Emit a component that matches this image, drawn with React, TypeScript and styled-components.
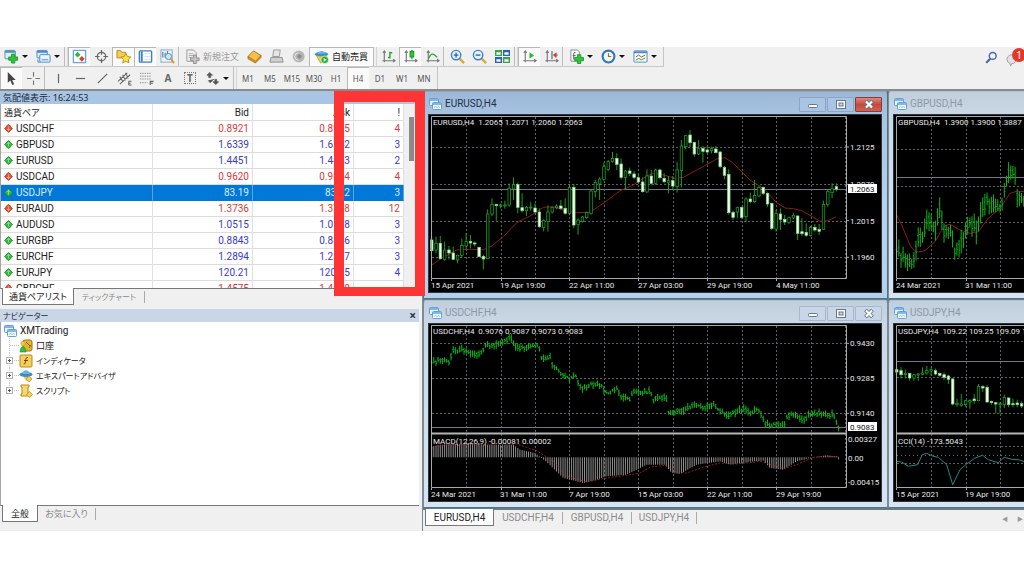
import React from 'react';
import styled, { createGlobalStyle, css } from 'styled-components';

const UI = '"Noto Sans", "Noto Sans CJK JP", sans-serif';
const CHART_FONT = 'Roboto, "Noto Sans", sans-serif';

const GlobalStyle = createGlobalStyle`
  * { box-sizing: border-box; }
  body { margin: 0; background: #fff; font-family: ${UI}; font-size: 10px; color: #222; overflow: hidden; }
  button { font: inherit; color: inherit; border: 0; background: none; padding: 0; margin: 0; }
`;

/* ---------- shell ---------- */
const Page = styled.div`padding: 47px 0; background: #fff;`;
const Terminal = styled.div`background: #f0f0f0; overflow: hidden;`;
const ToolRow = styled.div<{ $last?: boolean }>`
  display: flex;
  justify-content: space-between;
  height: ${p => (p.$last ? 24 : 20)}px;
  ${p => p.$last && css`border-bottom: 2px solid #8a8a8a;`}
`;
const Tools = styled.div<{ $last?: boolean }>`
  display: flex;
  align-items: stretch;
  border-right: 1px solid #c4c4c4;
  border-bottom: ${p => (p.$last ? 0 : 1)}px solid #c8c8c8;
  padding-right: 2px;
`;
const ToolButton = styled.button<{ $on?: boolean; $w?: number; $dim?: boolean }>`
  width: ${p => p.$w ?? 22}px;
  display: flex;
  align-items: center;
  justify-content: center;
  gap: 3px;
  font-size: 9px;
  line-height: 12px;
  white-space: nowrap;
  color: ${p => (p.$dim ? '#9a9a9a' : '#222')};
  ${p => p.$on && css`background: #fafafa; box-shadow: inset 1px 1px 0 #b8b8b8, inset -1px -1px 0 #fff;`}
`;
const CaretButton = styled.button`
  width: 10px;
  display: flex;
  align-items: center;
  justify-content: flex-start;
  &::after {
    content: '';
    border: 3px solid transparent;
    border-top-color: #111;
    border-bottom: 0;
  }
`;
const Divider = styled.span<{ $double?: boolean }>`
  width: ${p => (p.$double ? 4 : 3)}px;
  border-left: 1px solid #bdbdbd;
  ${p => p.$double && css`border-right: 1px solid #d6d6d6;`}
`;
const Frame = styled.button<{ $on?: boolean }>`
  width: 22px;
  font-size: 8px;
  color: #555;
  ${p => p.$on && css`background: #fafafa; box-shadow: inset 1px 1px 0 #b8b8b8;`}
`;
const Right = styled.div`display: flex; align-items: center; gap: 7px;`;
const Alerts = styled.button`position: relative; display: flex; align-items: flex-end; width: 18px; height: 20px;`;
const Badge = styled.span`
  position: absolute;
  top: 1px;
  left: 6px;
  width: 14px;
  height: 14px;
  border-radius: 50%;
  background: #e2382a;
  color: #fff;
  font-size: 10px;
  line-height: 14px;
  text-align: center;
`;
const Body = styled.div`display: flex; align-items: stretch;`;

/* ---------- left side ---------- */
const Side = styled.aside`position: relative; flex: 0 0 422px; min-width: 0; padding: 0 3px 4px 0;`;
const Panel = styled.section`display: flex; flex-direction: column;`;
const PanelHead = styled.h2<{ $idle?: boolean }>`
  margin: 0;
  display: flex;
  justify-content: space-between;
  align-items: center;
  height: 13px;
  padding: 0 3px;
  font-size: 9px;
  line-height: 12px;
  font-weight: 400;
  color: #1d2a3a;
  background: ${p => (p.$idle ? '#c9d6e6' : '#a9c5e4')};
`;
const CloseX = styled.button`font-size: 12px; font-weight: 700; line-height: 12px; color: #333;`;
const Kana = styled.span<{ $small?: boolean }>`
  font-family: "Noto Sans CJK JP", sans-serif;
  font-feature-settings: "palt";
  font-size: ${p => (p.$small ? 8 : 9)}px;
`;
const Scroller = styled.div`
  display: flex;
  height: 185px;
  overflow: hidden;
  background: #fff;
  border-left: 1px solid #a5a5a5;
  border-bottom: 1px solid #777;
`;
const Quotes = styled.table`
  flex: 1;
  align-self: flex-start;
  table-layout: fixed;
  border-collapse: separate;
  border-spacing: 0;
  font-family: Roboto, ${UI};
  font-size: 10px;
  line-height: 15px;
`;
const Th = styled.th<{ $w?: number; $left?: boolean }>`
  width: ${p => (p.$w ? `${p.$w}px` : 'auto')};
  height: 17px;
  padding: 0 3px;
  font-weight: 400;
  text-align: ${p => (p.$left ? 'left' : 'right')};
  border-right: 1px solid #e0e0e0;
  border-bottom: 1px solid #dcdcdc;
`;
const Td = styled.td<{ $tone: string; $sel?: boolean }>`
  height: 16px;
  padding: 0 3px;
  text-align: right;
  color: ${p => (p.$sel ? '#d8ecff' : p.$tone)};
  border-right: 1px solid ${p => (p.$sel ? '#5aa5e5' : '#e0e0e0')};
  border-bottom: 1px solid ${p => (p.$sel ? '#0078d7' : '#dcdcdc')};
  background: ${p => (p.$sel ? '#0078d7' : 'transparent')};
`;
const Pair = styled.span`display: flex; align-items: center; gap: 3px;`;
const Track = styled.div`flex: 0 0 15px; background: #f0f0f0; padding: 13px 5px 0;`;
const Thumb = styled.div`height: 44px; background: #8a8a8a;`;
const Tabs = styled.div<{ $tall?: boolean }>`display: flex; align-items: flex-start; height: ${p => (p.$tall ? 21 : 20)}px; padding-left: 2px;`;
const Tab = styled.button<{ $on?: boolean; $w: number; $latin?: boolean }>`
  width: ${p => p.$w}px;
  height: 16px;
  font-family: ${p => (p.$latin ? `Roboto, ${UI}` : UI)};
  font-size: ${p => (p.$latin ? 10 : 9)}px;
  line-height: 15px;
  white-space: nowrap;
  color: ${p => (p.$on ? '#222' : '#8b8b8b')};
  ${p =>
    p.$on
      ? css`background: #fff; border: 1px solid #777; border-top: 0; margin-top: -1px; height: 17px; line-height: 17px;`
      : css`border-right: 1px solid #aaa; height: 12px; margin-top: 2px; line-height: 12px;`}
`;
const Tree = styled.ul`
  list-style: none;
  margin: 0;
  padding: 1px 0 0 1px;
  height: 184px;
  background: #fff;
  border-left: 1px solid #a5a5a5;
  border-bottom: 1px solid #777;
`;
const Node = styled.li<{ $root?: boolean }>`
  display: flex;
  align-items: center;
  height: 15px;
  padding-left: ${p => (p.$root ? 2 : 4)}px;
  font-family: ${p => (p.$root ? 'Roboto, ' : '')}${UI};
  font-size: ${p => (p.$root ? 10 : 9)}px;
  line-height: 14px;
  & > span, & > b { margin-left: 3px; font-weight: 400; }
`;
const Highlight = styled.div`
  position: absolute;
  z-index: 3;
  left: 334px;
  right: -3px;
  top: 0;
  height: 205px;
  border: solid #ff3434;
  border-width: 11px 10px 9px 10px;
`;

/* ---------- chart windows ---------- */
const Main = styled.main`flex: 1; min-width: 0; overflow: hidden; border-left: 1px solid #7d8b93;`;
const Desktop = styled.div`
  display: grid;
  grid-template-columns: 465px 465px;
  row-gap: 1px;
  padding-bottom: 1px;
  background: #5b7f93;
  border-bottom: 1px solid #777;
`;
const Win = styled.section<{ $active?: boolean }>`
  padding: 0 5px 6px;
  border: 1px solid ${p => (p.$active ? '#52717f' : '#7b8c98')};
  border-top-color: ${p => (p.$active ? '#8fa9c0' : '#b5c3d0')};
  border-bottom: 1px solid #52747f;
  border-radius: 3px 3px 0 0;
  background: ${p =>
    p.$active
      ? 'linear-gradient(#9cb8d8, #a9c4e2 12%, #b9d2ec 60%, #b5d0ec)'
      : 'linear-gradient(#c1cedc, #cbd8e6 12%, #d8e4f2)'};
`;
const TitleBar = styled.header`display: flex; align-items: center; height: 23px; gap: 3px;`;
const Title = styled.h3<{ $active?: boolean }>`
  flex: 1;
  margin: 0;
  font-family: Roboto, ${UI};
  font-size: 10px;
  line-height: 14px;
  padding-top: 1px;
  font-weight: 400;
  color: ${p => (p.$active ? '#1f3044' : '#8c98a6')};
`;
const Controls = styled.div`display: flex; gap: 1px; padding-top: 2px;`;
const WinButton = styled.button<{ $red?: boolean; $active?: boolean }>`
  width: 27px;
  height: 15px;
  display: flex;
  align-items: center;
  justify-content: center;
  border: 1px solid ${p => (p.$red ? '#8c3a36' : p.$active ? '#8ca6c4' : '#a9b8ca')};
  border-radius: 1px;
  background: ${p =>
    p.$red ? 'linear-gradient(#d98a80, #c5493b 50%, #d4604c)' : p.$active ? '#a9c4e4' : '#c8d6e8'};
`;
const Plot = styled.svg`display: block; background: #000; outline: 1px solid #2a3540;`;

const WinControls = ({ active }: { active?: boolean }) => (
  <Controls>
    <WinButton $active={active} aria-label="Minimize">
      <svg width="10" height="8"><rect x=".5" y="3.500" width="9" height="3" rx="1" fill="#fff" stroke="#65778c" /></svg>
    </WinButton>
    <WinButton $active={active} aria-label="Maximize">
      <svg width="10" height="9"><rect x=".5" y=".5" width="9" height="8" fill="#fff" stroke="#65778c" /><rect x="3" y="3" width="4" height="3" fill="#c8d6e8" stroke="#65778c" /></svg>
    </WinButton>
    <WinButton $active={active} $red={active} aria-label="Close">
      <svg width="10" height="9"><path d="M1.500 1 8.500 8M8.500 1 1.500 8" stroke="#65778c" strokeWidth="3.800" /><path d="M2 1.500 8 7.500M8 1.500 2 7.500" stroke="#fff" strokeWidth="2.200" /></svg>
    </WinButton>
  </Controls>
);

const ChartIcon = () => (
  <svg width="13" height="12" viewBox="0 0 13 12" aria-hidden="true">
    <rect x=".5" y=".5" width="9" height="7" rx="1" fill="#e8f3fd" stroke="#5fa0dc" />
    <path d="M.5 2h9" stroke="#5fa0dc" strokeWidth="1.500" />
    <rect x="3.500" y="4.500" width="9" height="7" rx="1" fill="#f4f9fe" stroke="#5fa0dc" />
    <path d="M3.500 6h9" stroke="#5fa0dc" strokeWidth="1.500" />
    <path d="M5 9.500l1.500-1 1.500 1 1.500-1 1.500 1" fill="none" stroke="#8fbfe8" />
  </svg>
);

/* Chart series are kept on a grid of thirds of a pixel; px and py map them to the plot. */
const px = (v: number) => v / 3 - 9;
type Pt = [number, number];
type Candle = [0 | 1, number, number, number, number];
const noise = (i: number) => { const s = Math.sin(i * 12.9898) * 43758.5453; return s - Math.floor(s); };
const sample = (pts: Pt[], x: number) => {
  for (let i = 1; i < pts.length; i++) {
    if (x <= pts[i][0]) {
      const [a, b] = [pts[i - 1], pts[i]];
      return a[1] + ((b[1] - a[1]) * (x - a[0])) / (b[0] - a[0]);
    }
  }
  return pts[pts.length - 1][1];
};

/* filled, body top, body bottom, high, low */
const eurusd: Candle[] = [
  [1,450,482,440,482],[0,460,480,440,490],[1,460,506,438,508],[0,480,508,455,512],[1,480,489,468,508],[1,489,508,470,510],
  [0,496,510,494,520],[0,466,496,446,504],[0,455,468,430,480],[1,454,459,435,475],[1,459,462,455,470],[1,472,500,470,502],
  [1,499,507,494,538],[0,372,506,358,506],[0,343,372,325,378],[1,343,347,342,392],[0,345,347,340,355],[0,345,348,332,356],
  [0,295,345,280,350],[0,283,297,262,330],[1,283,352,278,370],[1,353,362,310,368],[0,352,362,348,378],[0,351,354,335,362],
  [1,354,366,340,368],[1,366,410,355,414],[0,392,412,388,424],[0,366,394,346,425],[0,352,366,350,370],[0,348,353,343,358],
  [1,348,355,330,358],[1,355,370,325,374],[0,292,370,282,376],[1,292,405,282,415],[0,390,403,385,434],[0,381,395,378,398],
  [0,367,383,365,386],[0,303,370,298,374],[0,277,305,270,322],[0,267,282,262,330],[0,230,268,218,272],[0,215,238,210,244],
  [0,205,214,186,218],[1,205,223,190,240],[1,222,262,205,268],[0,243,262,240,298],[1,243,250,233,258],[1,252,262,244,268],
  [1,263,276,252,282],[1,276,305,262,308],[0,258,306,238,308],[1,258,280,240,284],[0,240,280,236,284],[1,240,263,236,268],
  [1,265,275,250,280],[0,272,277,258,310],[1,272,288,258,300],[0,240,290,215,308],[0,168,242,150,292],[0,137,170,135,178],
  [1,135,158,120,172],[1,157,192,155,200],[0,176,192,150,195],[1,175,184,168,218],[1,180,186,168,190],[0,176,182,170,190],
  [1,177,188,168,190],[1,186,230,183,235],[1,232,256,228,268],[1,253,368,238,374],[1,367,382,362,390],[0,353,366,350,385],
  [1,352,382,350,386],[0,327,380,322,396],[1,327,335,308,340],[0,316,335,270,338],[0,292,318,288,322],[1,292,310,290,315],
  [1,310,342,308,350],[1,340,415,338,420],[0,370,417,360,425],[1,372,388,355,420],[1,388,396,375,405],[0,383,397,380,402],
  [0,376,384,368,388],[1,378,430,376,450],[1,425,431,385,438],[1,427,436,400,440],[0,412,436,408,440],[1,412,420,402,425],
  [1,418,424,402,435],[0,343,418,332,420],[0,305,343,300,350],[0,296,308,280,325],[1,290,297,280,305],
];
const usdjpy: Candle[] = [
  [1,215,222,208,228],[1,218,230,208,242],[0,226,230,215,242],[1,226,240,225,248],[0,230,240,228,248],[0,228,231,226,248],
  [0,225,229,208,232],[0,218,225,204,230],[0,215,219,206,234],[1,218,228,212,232],[1,226,232,224,236],[1,230,238,224,246],
  [1,234,244,230,258],[1,243,318,240,322],[0,316,320,302,326],[0,318,322,288,326],[0,308,320,306,326],[0,307,312,304,332],
  [1,303,308,288,318],[0,265,308,258,310],[1,266,270,262,282],[1,268,312,262,314],[1,310,314,308,320],[1,314,318,312,346],
  [0,317,320,312,347],[0,298,320,290,330],[1,300,320,298,328],[1,317,320,302,328],[1,315,320,305,328],[1,317,324,310,330],
  [1,320,330,314,336],[0,312,330,306,336],
];
const eurMa: Pt[] = [[35,525],[60,508],[110,480],[150,478],[190,479],[215,468],[250,440],[290,398],[330,378],[370,352],[400,350],[435,362],[470,368],[510,367],[550,340],[600,302],[640,285],[680,258],[700,250],[730,255],[765,265],[790,262],[840,235],[890,207],[915,203],[940,220],[990,270],[1030,295],[1070,338],[1095,354],[1120,356],[1145,362],[1180,382],[1200,394],[1225,392],[1248,380]];
const gbpPath: Pt[] = [[35,635],[50,645],[65,665],[80,670],[95,610],[120,570],[130,535],[145,560],[155,560],[160,500],[168,500],[175,570],[195,575],[210,625],[235,600],[245,545],[275,570],[290,500],[305,480],[325,500],[350,495],[360,430],[370,395],[388,395],[393,450],[405,480],[440,500]];
const gbpMa: Pt[] = [[35,525],[50,555],[75,615],[88,632],[100,636],[120,632],[150,605],[170,570],[182,556],[195,553],[225,570],[255,580],[280,575],[310,535],[345,505],[375,460],[395,454],[440,456]];
const chfPath: Pt[] = [[35,195],[50,188],[90,188],[95,160],[110,158],[125,155],[140,160],[165,168],[185,162],[200,140],[230,140],[245,130],[260,128],[275,118],[285,145],[320,150],[340,142],[355,138],[365,180],[390,178],[400,205],[430,232],[445,240],[465,232],[485,272],[500,268],[515,255],[545,265],[560,285],[590,272],[605,298],[630,302],[640,285],[690,280],[700,305],[738,298],[745,345],[790,338],[820,320],[855,330],[875,318],[920,352],[950,340],[975,332],[990,348],[1015,330],[1035,378],[1090,382],[1105,350],[1130,350],[1150,368],[1170,345],[1240,350],[1250,378],[1262,390]];
const macd: Pt[] = [[35,445],[60,440],[130,437],[200,440],[280,440],[300,455],[345,465],[380,492],[430,540],[490,555],[530,545],[560,535],[620,530],[680,500],[735,500],[755,525],[780,528],[830,500],[900,490],[930,500],[1000,490],[1030,488],[1050,510],[1090,515],[1130,490],[1170,480],[1220,472],[1250,475],[1262,495]];
const signal: Pt[] = [[35,450],[80,440],[180,438],[290,438],[350,458],[400,490],[440,535],[500,552],[560,540],[620,532],[660,525],[690,508],[735,502],[770,522],[800,525],[850,508],[900,495],[950,498],[1020,490],[1060,502],[1090,512],[1130,500],[1180,478],[1220,474],[1262,478]];
const cci: Pt[] = [[35,490],[50,492],[70,505],[98,500],[112,470],[125,466],[145,475],[160,478],[185,500],[203,560],[225,515],[245,498],[270,480],[293,472],[310,485],[340,494],[358,478],[380,484],[400,485],[440,498]];

interface ChartProps {
  shift: number;
  title: string;
  grid: number[];
  price: [number, string];
  prices: [number, string][];
  times: string[];
  candles?: Candle[];
  bars?: Pt[];
  spread?: number;
  ma?: Pt[];
  split?: boolean;
  lower?: 'macd' | 'cci';
  lowerTitle?: string;
  lowerLabels?: [number, string][];
}

const Chart = (p: ChartProps) => {
  const py = (v: number) => v / 3 - p.shift;
  const line = (pts: Pt[]) => pts.map(([x, y]) => `${px(x).toFixed(1)},${py(y).toFixed(1)}`).join(' ');
  const cols = Array.from({ length: 12 }, (_, i) => Math.round(2.6 + 34.45 * (i + 1)) + 0.5);
  const barXs = p.bars ? Array.from({ length: 191 }, (_, i) => 35 + i * 6.458).filter(x => x <= p.bars![p.bars!.length - 1][0]) : [];
  const spread = p.spread ?? 11;
  return (
    <Plot width="452" height="177" viewBox="0 0 452 177" fontFamily={CHART_FONT} fontSize="8" fill="#e6e6e6" role="img" aria-label={p.title}>
      <g stroke="#8b96a0" strokeWidth="1" strokeDasharray="2 2" opacity=".65">
        {cols.map(x => <path key={x} d={`M${x} 2V163`} />)}
        {p.grid.map(y => <path key={y} d={`M3 ${Math.round(py(y)) + 0.5}H418`} />)}
      </g>
      <path d={`M3 ${Math.round(py(p.price[0])) + 0.5}H418`} stroke="#6f7a88" />
      {p.lower === 'macd' && (
        <g>
          <path d={barXs.map(x => `M${px(x).toFixed(1)} ${py(478)}V${py(sample(macd, x)).toFixed(1)}`).join('')} stroke="#8f8f8f" fill="none" />
          <polyline points={line(signal)} fill="none" stroke="#b02a2a" strokeWidth=".8" strokeDasharray="2 1.500" />
        </g>
      )}
      {p.lower === 'cci' && (
        <g>
          <path d={`M3 ${py(472)}H418`} stroke="#77818b" strokeDasharray="1 3" />
          <polyline points={line(cci)} fill="none" stroke="#2f8583" strokeWidth="1" />
        </g>
      )}
      {p.ma && <polyline points={line(p.ma)} fill="none" stroke="#8e1a1a" strokeWidth="1" />}
      {p.candles?.map(([full, top, bottom, high, low], i) => {
        const x = 2.7 + i * 4.305;
        return (
          <g key={i} stroke="#1cae27" strokeWidth=".9">
            <path d={`M${x} ${py(high)}V${py(top)}M${x} ${py(bottom)}V${py(low)}`} />
            <rect x={x - 1.2} y={py(top)} width="2.500" height={Math.max(1, (bottom - top) / 3)} fill={full ? '#f2fff0' : '#000'} stroke={full ? '#7fdc7f' : '#1cae27'} strokeWidth=".7" />
          </g>
        );
      })}
      {p.bars && (
        <path
          fill="none"
          stroke="#14b31e"
          strokeWidth="1"
          d={barXs.map((x, i) => {
            const y = sample(p.bars!, x) + (noise(i + 900) - 0.5) * spread * 0.7;
            const up = spread * (0.25 + noise(i));
            const down = spread * (0.25 + noise(i + 300));
            return `M${px(x).toFixed(1)} ${py(y - up).toFixed(1)}V${py(y + down).toFixed(1)}M${px(x - 3).toFixed(1)} ${py(y - up / 3).toFixed(1)}h1M${px(x).toFixed(1)} ${py(y + down / 3).toFixed(1)}h1`;
          }).join('')}
        />
      )}
      <path d="M2.500 163.500V1.500H417.500V163.500Z" fill="none" stroke="#a9a9a9" />
      {p.split && <path d="M2 109.500H418" stroke="#b5b5b5" strokeWidth="2" />}
      {[0, 2, 4, 6, 8, 10].map(i => <path key={i} d={`M${i ? cols[i - 1] : 2.5} 164v2`} stroke="#a9a9a9" />)}
      {p.prices.map(([y, t]) => <g key={t}><path d={`M418 ${py(y)}h2`} stroke="#a9a9a9" /><text x="421" y={py(y) + 3}>{t}</text></g>)}
      {p.lowerLabels?.map(([y, t]) => <text key={t} x="419" y={py(y) + 3}>{t}</text>)}
      <rect x="419" y={py(p.price[0]) - 5} width="29" height="9" fill="#fff" />
      <text x="421" y={py(p.price[0]) + 3} fill="#111">{p.price[1]}</text>
      <text x="4" y="10" style={{ whiteSpace: 'pre' }}>{p.title}</text>
      {p.lowerTitle && <text x="4" y={py(428) + 3}>{p.lowerTitle}</text>}
      {p.times.map((t, i) => <text key={t} x={2 + Math.round(i * 68.9)} y="173">{t}</text>)}
    </Plot>
  );
};

const ChartWindow = ({ name, active, ...chart }: ChartProps & { name: string; active?: boolean }) => (
  <Win $active={active}>
    <TitleBar>
      <ChartIcon />
      <Title $active={active}>{name}</Title>
      <WinControls active={active} />
    </TitleBar>
    <Chart {...chart} />
  </Win>
);

/* ---------- toolbar drawings, each on a 16 x 16 field ---------- */
const Plus = ({ x = 6, y = 6 }: { x?: number; y?: number }) => (
  <path d={`M${x + 3} ${y}h3.500v3h3v3.500h-3v3h-3.500v-3h-3v-3.500h3z`} fill="#2fc53a" stroke="#128a1c" strokeWidth=".8" />
);
const Axes = () => <path d="M3.500 2v12M1.500 12.500H15M2 4l1.500-2L5 4M13 11l2 1.500L13 14" fill="none" stroke="#777" strokeWidth="1.200" />;
const drawings: Record<string, React.ReactNode> = {
  newChart: <><rect x="1" y="1.500" width="11" height="9" rx="1" fill="#dff0f4" stroke="#4b93b2" /><path d="M1 3h11" stroke="#4b93b2" strokeWidth="2" /><Plus x={5} y={5.5} /></>,
  profiles: <><rect x="1" y="1.500" width="11" height="8" rx="1" fill="#dcecfb" stroke="#4b8ac9" /><path d="M1 3h11" stroke="#4b8ac9" strokeWidth="2" /><rect x="4" y="6" width="11" height="8" rx="1" fill="#eaf4fd" stroke="#4b8ac9" /><path d="M2 11v3h3M6 11.500h7" stroke="#4b8ac9" fill="none" /></>,
  market: <><rect x="1.500" y="1.500" width="13" height="13" fill="#fff" stroke="#68a8dd" strokeWidth="1.400" /><path d="M6 3l3 3-3 3-3-3z" fill="#33b83c" /><path d="M10.500 7.500l3 3-3 3-3-3z" fill="#d8432b" /></>,
  target: <g fill="none" stroke="#666" strokeWidth="1.300"><circle cx="8" cy="8" r="4.500" /><path d="M8 1v5M8 10v5M1 8h5M10 8h5" /></g>,
  star: <><path d="M1 1.500h4l1 2h4v6H1z" fill="#f2ce5a" stroke="#b88a1c" /><path d="M10.500 4.500l1.700 3.500 3.500.5-2.600 2.500.7 3.800-3.300-1.800-3.300 1.800.7-3.800-2.600-2.500 3.500-.5z" fill="#ffe04d" stroke="#bd8d12" /></>,
  terminal: <><rect x="1.500" y="2" width="13" height="12" rx="1" fill="#fdfdff" stroke="#3d7fc0" strokeWidth="1.500" /><path d="M4 2.500v11" stroke="#3d7fc0" strokeWidth="2" /><path d="M7 5h6M7 8h6M7 11h6" stroke="#d5dfea" /></>,
  tester: <><rect x="1" y="1" width="12" height="13" fill="#eef5fb" stroke="#8aa5bd" /><path d="M3 3v6M5.500 4v5M8 2v5" stroke="#5a86ad" strokeWidth="1.300" /><circle cx="9" cy="8" r="3.300" fill="#cfe6f8" stroke="#5187b8" /><path d="M11.500 10.500L15 15" stroke="#d29c2a" strokeWidth="2" /></>,
  order: <><path d="M2 1h7l3 3v9H2z" fill="#f2f2f2" stroke="#9a9a9a" /><path d="M4 5h5M4 7h5M4 9h3" stroke="#aaa" /><path d="M9 6.500h3v3h3v3h-3v3H9v-3H6v-3h3z" fill="#c4c4c4" stroke="#8d8d8d" /></>,
  book: <><path d="M1 8l6-6 8 5-6 7z" fill="#f5c04a" stroke="#a9731a" /><path d="M1 8v2.500L9 15l6-6V7l-6 6z" fill="#d9952a" stroke="#a06b14" strokeWidth=".7" /></>,
  print: <><path d="M5 1h7l-1 7H4z" fill="#e5e5e5" stroke="#9a9a9a" /><path d="M2 9h12l1 5H1z" fill="#d0d0d0" stroke="#8f8f8f" /></>,
  signal: <><circle cx="8" cy="8" r="6.500" fill="#b5b5b5" /><path d="M8 4a4 4 0 0 0 0 8M8 1.500a6.500 6.500 0 0 0 0 13" fill="none" stroke="#e8e8e8" /><circle cx="9" cy="8" r="2.300" fill="#8d8d8d" /></>,
  auto: <><path d="M2 6l5 9 6-3V6z" fill="#f2c94c" stroke="#b98a1b" strokeWidth=".7" /><ellipse cx="8" cy="5.500" rx="7" ry="2.500" fill="#3f8fcd" /><path d="M4 5c0-4 8-4 8 0z" fill="#6cb4e6" /><circle cx="11.500" cy="11.500" r="4" fill="#25b432" stroke="#fff" strokeWidth=".6" /><path d="M10.300 9.500v4l3.200-2z" fill="#fff" /></>,
  bars: <><Axes /><path d="M9.500 3v7M9.500 4H12M7.500 9h2" stroke="#2aa336" strokeWidth="1.500" fill="none" /></>,
  candles: <><Axes /><path d="M9.500 1v10" stroke="#13941f" strokeWidth="1.300" /><rect x="7.500" y="2.500" width="4" height="6" fill="#2fc53a" stroke="#13941f" /></>,
  line: <><Axes /><path d="M4 10c2-6 5-6 9-1" fill="none" stroke="#2aa336" strokeWidth="1.400" /></>,
  zoomIn: <><path d="M9.500 9.500L15 15" stroke="#d9ab33" strokeWidth="2.600" /><circle cx="6.500" cy="6.500" r="5" fill="#e3f1fc" stroke="#3e83c9" strokeWidth="1.500" /><path d="M4 6.500h5M6.500 4v5" stroke="#2a6bb5" strokeWidth="1.500" /></>,
  zoomOut: <><path d="M9.500 9.500L15 15" stroke="#d9ab33" strokeWidth="2.600" /><circle cx="6.500" cy="6.500" r="5" fill="#e3f1fc" stroke="#3e83c9" strokeWidth="1.500" /><path d="M4 6.500h5" stroke="#2a6bb5" strokeWidth="1.500" /></>,
  tile: <><path d="M0 1h7.500v6.500H0zM8.500 8.500H16V15H8.500z" fill="#3ba344" /><path d="M8.500 1H16v6.500H8.500zM0 8.500h7.500V15H0z" fill="#2c62b5" /><path d="M1.500 3.500H6v2.500H1.500zM10 3.500h4.500v2.500H10zM1.500 11H6v2.500H1.500zM10 11h4.500v2.500H10z" fill="#f3f8ff" /></>,
  scroll: <><Axes /><path d="M8 3.500v7l5-3.500z" fill="#2fb83a" /></>,
  shift: <><Axes /><path d="M8.500 2v9" stroke="#777" strokeWidth="1.400" /><path d="M10 6.500l3-2.500v5zM13 6.500h2" fill="#b5463a" stroke="#b5463a" strokeWidth=".8" /></>,
  indicators: <><path d="M2 1h7l2 2v10H2z" fill="#fafafa" stroke="#888" /><path d="M7 4c-2-1-2 1-2 3v4M4 7h3" fill="none" stroke="#555" /><Plus x={6} y={6} /></>,
  clock: <><circle cx="8" cy="8" r="6.300" fill="#f4f9fe" stroke="#2f74bd" strokeWidth="2.200" /><path d="M8 4.500V8h3" fill="none" stroke="#a5642a" strokeWidth="1.300" /></>,
  template: <><rect x="1" y="2" width="14" height="12" rx="1" fill="#f5faf5" stroke="#4b8ac9" /><path d="M1 3.500h14" stroke="#4b8ac9" strokeWidth="2" /><path d="M3 8.500l3-2 3 2 4-2" fill="none" stroke="#c0492b" /><path d="M3 12l3-2 3 1.500 4-2" fill="none" stroke="#2aa336" /></>,
  search: <><path d="M6.500 9.500L1.500 14.500" stroke="#3f5fae" strokeWidth="2.400" /><circle cx="9.500" cy="6" r="4.200" fill="#f2f6ff" stroke="#4767b5" strokeWidth="1.800" /></>,
  bubble: <path d="M1 8a5 5 0 0 1 10 0 5 4.500 0 0 1-5 4.500L5 15l-1-3A4.500 4.500 0 0 1 1 8z" fill="#e2e2e6" stroke="#9a9aa2" />,
  cursor: <path d="M4 1v11.500l2.800-2.300 2 4.800 2-1-2-4.500h3.700z" fill="#444" />,
  cross: <path d="M8 1v5M8 10v5M1 8h5M10 8h5" stroke="#777" strokeWidth="1.200" />,
  vline: <path d="M8 3v10" stroke="#666" strokeWidth="1.300" />,
  hline: <path d="M3 8h10" stroke="#666" strokeWidth="1.300" />,
  trend: <path d="M3 13L13 3" stroke="#666" strokeWidth="1.300" />,
  channel: <path d="M1 11L11 2M3 14L14 4M3 6l3 5M6 4l3 6M9 2l3 6M12.500 11v4M12.500 11h3M12.500 13h2M12.500 15h3" stroke="#666" strokeWidth="1.100" />,
  fibo: <><path d="M1 2.500h12M1 5.500h12M1 8.500h12M1 12.500h8" stroke="#888" strokeDasharray="1.500 1" /><path d="M12 15v-4h3.500M12 13h3" fill="none" stroke="#666" strokeWidth="1.200" /></>,
  arrows: <path d="M5 1.500l3 3H6v2.500H4V4.500H2zM3.500 10l2 2.500 4-4M11.500 14.500l-3-3h2V9h2v2.500h2z" fill="#555" stroke="#555" strokeWidth=".8" />,
};
const Icon = ({ name, size = 15 }: { name: string; size?: number }) => (
  <svg width={size} height={size} viewBox="0 0 16 16" aria-hidden="true">{drawings[name]}</svg>
);
const Tool = ({ name, on, w }: { name: string; on?: boolean; w?: number }) => (
  <ToolButton aria-label={name} $on={on} $w={w}><Icon name={name} /></ToolButton>
);

const Letter = styled.span<{ $boxed?: boolean }>`
  font-size: 10px;
  line-height: 11px;
  font-weight: 700;
  color: #666;
  ${p => p.$boxed && css`width: 12px; border: 1px dotted #777; line-height: 10px;`}
`;

/* ---------- tree drawings ---------- */
const treeIcons: React.ReactNode[] = [
  <><rect x="4" y="1" width="9" height="11" rx="2" fill="#e5b52e" stroke="#9c7213" /><path d="M7 3l4 4M10 9l2-3" stroke="#8a6210" /><circle cx="4" cy="4.500" r="2.200" fill="#f2c94c" stroke="#b98a1b" strokeWidth=".5" /><path d="M1 13c0-7 6-7 6 0z" fill="#35bf3e" stroke="#1c8f27" strokeWidth=".6" /></>,
  <><rect x="1" y="1" width="12" height="12" rx="1" fill="#f4cf5b" stroke="#b98a1b" /><path d="M9 3.500c-2-.5-2 1-2.300 3s-.5 4-2 3.500M5 6.500h4" fill="none" stroke="#6b4c0c" /></>,
  <><path d="M3 5l4 7 4-3z" fill="#f2c94c" /><ellipse cx="7" cy="5.500" rx="6.500" ry="2.500" fill="#3a8dc8" /><path d="M3.500 5c0-5 7-5 7 0z" fill="#68b3e2" /><path d="M10 7l3 3-3 3-3-3z" fill="#f4cf5b" stroke="#b98a1b" strokeWidth=".7" /></>,
  <><path d="M2 1h8v2H9v7h1v2H2v-2h1V3H2z" fill="#f6d873" stroke="#b98a1b" /><path d="M10.500 7.500l3 3-3 3-3-3z" fill="#f4cf5b" stroke="#b98a1b" strokeWidth=".7" /></>,
];
const Expander = ({ box, last }: { box?: boolean; last?: boolean }) => (
  <svg width="13" height="15" aria-hidden="true">
    <path d={`M3.500 0v${last ? 7 : 15}M4 7.500h9`} stroke="#c0c0c0" strokeDasharray="1 1" fill="none" />
    {box && <><rect x=".5" y="4.500" width="6" height="6" fill="#fff" stroke="#b0b0b0" /><path d="M2 7.500h3M3.500 6v3" stroke="#555" /></>}
  </svg>
);
const TreeIcon = ({ i }: { i: number }) => <svg width="14" height="14" viewBox="0 0 14 14" aria-hidden="true">{treeIcons[i]}</svg>;

const Direction = ({ up }: { up?: boolean }) => (
  <svg width="9" height="9" viewBox="0 0 9 9" aria-hidden="true">
    {up
      ? <path d="M4.500.5l4 4-1.500 1V6.500L4.500 8.500 2 6.500V5.500L.5 4.500z" fill="#35b83e" stroke="#1c8a26" strokeWidth=".8" />
      : <path d="M4.500 8.500l-4-4L2 3.500v-1L4.500.5 7 2.500v1l1.500 1z" fill="#e2553a" stroke="#b23418" strokeWidth=".8" />}
    <path d={up ? 'M4.500 2.500v4M3 4l1.500-1.500L6 4' : 'M4.500 2.500v4M3 5l1.500 1.500L6 5'} fill="none" stroke="#fff" strokeWidth=".6" opacity=".7" />
  </svg>
);

const RED = '#d63a3a';
const BLUE = '#3a3ac8';
const rows: [string, boolean, string, string, string][] = [
  ['USDCHF', false, '0.8921', '0.8925', '4'],
  ['GBPUSD', true, '1.6339', '1.6342', '3'],
  ['EURUSD', true, '1.4451', '1.4453', '2'],
  ['USDCAD', false, '0.9620', '0.9624', '4'],
  ['USDJPY', true, '83.19', '83.22', '3'],
  ['EURAUD', false, '1.3736', '1.3748', '12'],
  ['AUDUSD', true, '1.0515', '1.0518', '3'],
  ['EURGBP', true, '0.8843', '0.8846', '3'],
  ['EURCHF', true, '1.2894', '1.2897', '3'],
  ['EURJPY', true, '120.21', '120.25', '4'],
  ['GBPCHF', false, '1.4575', '1.4580', ''],
];
const periods = ['M1', 'M5', 'M15', 'M30', 'H1', 'H4', 'D1', 'W1', 'MN'];
const ScrollArrows = styled.div`display: flex; gap: 9px; margin-left: auto; padding: 5px 1px 0 0; color: #999; font-size: 6px; line-height: 8px;`;

export default function App() {
  return (
    <Page>
      <GlobalStyle />
      <Terminal>
        <ToolRow>
          <Tools>
            <Tool name="newChart" /><CaretButton aria-label="newChart menu" />
            <Tool name="profiles" /><CaretButton aria-label="profiles menu" />
            <Divider $double />
            <Tool name="market" on /><Tool name="target" /><Tool name="star" on /><Tool name="terminal" on /><Tool name="tester" />
            <Divider />
            <ToolButton $w={62} $dim><Icon name="order" />新規注文</ToolButton>
            <Tool name="book" /><Tool name="print" /><Tool name="signal" />
            <ToolButton $w={64} $on><Icon name="auto" />自動売買</ToolButton>
            <Divider $double />
            <Tool name="bars" /><Tool name="candles" on /><Tool name="line" />
            <Divider />
            <Tool name="zoomIn" /><Tool name="zoomOut" /><Tool name="tile" w={24} />
            <Divider $double />
            <Tool name="scroll" on /><Tool name="shift" />
            <Divider />
            <Tool name="indicators" /><CaretButton aria-label="indicators menu" />
            <Tool name="clock" /><CaretButton aria-label="clock menu" />
            <Tool name="template" /><CaretButton aria-label="template menu" />
          </Tools>
          <Right>
            <ToolButton aria-label="search" $w={16}><Icon name="search" size={13} /></ToolButton>
            <Alerts aria-label="alerts"><Icon name="bubble" /><Badge>1</Badge></Alerts>
          </Right>
        </ToolRow>
        <ToolRow $last>
          <Tools $last>
            <Tool name="cursor" on /><Tool name="cross" />
            <Divider />
            <Tool name="vline" /><Tool name="hline" /><Tool name="trend" /><Tool name="channel" /><Tool name="fibo" />
            <ToolButton aria-label="text"><Letter>A</Letter></ToolButton>
            <ToolButton aria-label="label"><Letter $boxed>T</Letter></ToolButton>
            <Tool name="arrows" /><CaretButton aria-label="arrows menu" />
            <Divider $double />
            {periods.map(t => <Frame key={t} $on={t === 'H4'}>{t}</Frame>)}
          </Tools>
        </ToolRow>
        <Body>
          <Side>
            <Panel>
              <PanelHead>気配値表示: 16:24:53</PanelHead>
              <Scroller>
                <Quotes>
                  <thead>
                    <tr>
                      <Th $w={152} $left><Kana>通貨ペア</Kana></Th><Th $w={100}>Bid</Th><Th $w={101}>Ask</Th><Th>!</Th>
                    </tr>
                  </thead>
                  <tbody>
                    {rows.map(([name, up, bid, ask, spread]) => {
                      const sel = name === 'USDJPY';
                      const tone = up ? BLUE : RED;
                      return (
                        <tr key={name}>
                          <Td $tone="#222" $sel={sel}><Pair><Direction up={up} />{name}</Pair></Td>
                          <Td $tone={tone} $sel={sel}>{bid}</Td>
                          <Td $tone={tone} $sel={sel}>{ask}</Td>
                          <Td $tone={tone} $sel={sel}>{spread}</Td>
                        </tr>
                      );
                    })}
                  </tbody>
                </Quotes>
                <Track><Thumb /></Track>
              </Scroller>
              <Tabs>
                <Tab $on $w={72}><Kana>通貨ペアリスト</Kana></Tab>
                <Tab $w={71}><Kana $small>ティックチャート</Kana></Tab>
              </Tabs>
            </Panel>
            <Panel>
              <PanelHead $idle><Kana $small>ナビゲーター</Kana><CloseX aria-label="Close navigator">×</CloseX></PanelHead>
              <Tree>
                <Node $root><ChartIcon /><b>XMTrading</b></Node>
                <Node><Expander /><TreeIcon i={0} /><Kana>口座</Kana></Node>
                <Node><Expander box /><TreeIcon i={1} /><Kana $small>インディケータ</Kana></Node>
                <Node><Expander box /><TreeIcon i={2} /><Kana $small>エキスパートアドバイザ</Kana></Node>
                <Node><Expander box last /><TreeIcon i={3} /><Kana $small>スクリプト</Kana></Node>
              </Tree>
              <Tabs $tall>
                <Tab $on $w={36}>全般</Tab>
                <Tab $w={58}><Kana>お気に入り</Kana></Tab>
              </Tabs>
            </Panel>
            <Highlight />
          </Side>
          <Main>
            <Desktop>
              <ChartWindow
                active name="EURUSD,H4" shift={25} title="EURUSD,H4  1.2065 1.2071 1.2060 1.2063"
                grid={[171, 283, 392, 502]} price={[297, '1.2063']}
                prices={[[171, '1.2125'], [283, '1.2070'], [392, '1.2015'], [502, '1.1960']]}
                times={['15 Apr 2021', '19 Apr 19:00', '22 Apr 11:00', '27 Apr 03:00', '29 Apr 19:00', '4 May 11:00']}
                candles={eurusd} ma={eurMa}
              />
              <ChartWindow
                name="GBPUSD,H4" shift={75} title="GBPUSD,H4  1.3900 1.3900 1.3887 1.3890"
                grid={[328, 438, 545, 653]} price={[411, '1.3890']} prices={[]}
                times={['24 Mar 2021', '31 Mar 11:00', '7 Apr 19:00']} bars={gbpPath} spread={30} ma={gbpMa}
              />
              <ChartWindow
                name="USDCHF,H4" shift={26} title="USDCHF,H4  0.9076 0.9087 0.9073 0.9083"
                grid={[136, 241, 346]} price={[387, '0.9083']}
                prices={[[136, '0.9430'], [241, '0.9285'], [346, '0.9140']]}
                times={['24 Mar 2021', '31 Mar 11:00', '7 Apr 19:00', '15 Apr 03:00', '22 Apr 11:00', '29 Apr 19:00']}
                bars={chfPath} split lower="macd" lowerTitle="MACD(12,26,9) -0.00081 0.00002"
                lowerLabels={[[424, '0.00327'], [480, '0.00'], [552, '-0.00415']]}
              />
              <ChartWindow
                name="USDJPY,H4" shift={26} title="USDJPY,H4  109.22 109.25 109.09 109.12"
                grid={[130, 238, 346, 443, 495]} price={[188, '109.12']} prices={[]}
                times={['15 Apr 2021', '19 Apr 19:00', '22 Apr 11:00']} candles={usdjpy}
                split lower="cci" lowerTitle="CCI(14) -173.5043"
              />
            </Desktop>
            <Tabs $tall>
              <Tab $latin $on $w={69}>EURUSD,H4</Tab>
              <Tab $latin $w={69}>USDCHF,H4</Tab>
              <Tab $latin $w={69}>GBPUSD,H4</Tab>
              <Tab $latin $w={65}>USDJPY,H4</Tab>
              <ScrollArrows><span>◀</span><span>▶</span></ScrollArrows>
            </Tabs>
          </Main>
        </Body>
      </Terminal>
    </Page>
  );
}
